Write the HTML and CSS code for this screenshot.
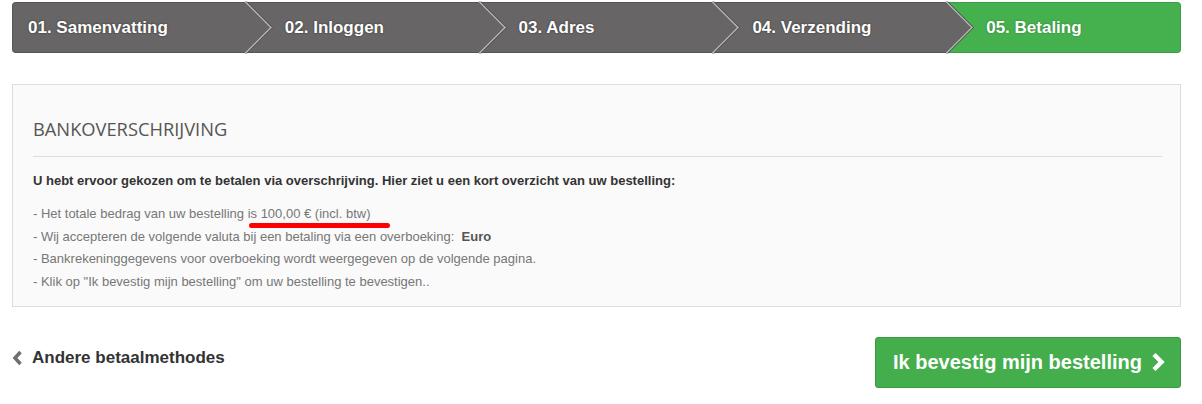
FILE: index.html
```html
<!DOCTYPE html>
<html lang="nl">
<head>
    <meta charset="UTF-8">
    <meta name="viewport" content="width=device-width, initial-scale=1.0">
    <title>Betaling</title>
    <link rel="stylesheet" href="styles.css">
</head>
<body>
    <div class="page">
        <ul class="steps">
            <li class="step first">01. Samenvatting</li>
            <li class="step">02. Inloggen</li>
            <li class="step">03. Adres</li>
            <li class="step">04. Verzending</li>
            <li class="step active last">05. Betaling</li>
        </ul>

        <div class="payment-box">
            <h3 class="box-title">BANKOVERSCHRIJVING</h3>
            <p class="intro">U hebt ervoor gekozen om te betalen via overschrijving. Hier ziet u een kort overzicht van uw bestelling:</p>
            <p class="info">
                - Het totale bedrag van uw bestelling i<span class="marked">s 100,00 € (incl. btw)</span><br>
                - Wij accepteren de volgende valuta bij een betaling via een overboeking:&nbsp; <b>Euro</b><br>
                - Bankrekeninggegevens voor overboeking wordt weergegeven op de volgende pagina.<br>
                - Klik op "Ik bevestig mijn bestelling" om uw bestelling te bevestigen..
            </p>
        </div>

        <div class="actions">
            <a class="back-link" href="#">
                <svg class="chev" width="11" height="16" viewBox="0 0 11 16"><path d="M8.5 2 L3 8 L8.5 14" fill="none" stroke="#6f6f6f" stroke-width="3.5"/></svg>
                Andere betaalmethodes
            </a>
            <button class="confirm">
                Ik bevestig mijn bestelling
                <svg class="chev" width="15" height="20" viewBox="0 0 15 20"><path d="M3 2.5 L10.5 10 L3 17.5" fill="none" stroke="#fff" stroke-width="4.5"/></svg>
            </button>
        </div>
    </div>
</body>
</html>
```

FILE: styles.css
```css
body{
    margin: 0;
    background-color: #fff;
    font-family: "Liberation Sans", Arial, sans-serif;
}
.page{
    padding: 2px 21px 0 12px;
}

/* steps bar */
.steps{
    display: flex;
    list-style: none;
    margin: 0;
    padding: 0;
    height: 51px;
}
.step{
    flex: none;
    width: 20%;
    position: relative;
    display: flex;
    align-items: center;
    padding-left: 39px;
    background-color: #676565;
    border-top: 1px solid #555;
    border-bottom: 1px solid #555;
    box-sizing: border-box;
    color: #fff;
    font-weight: bold;
    font-size: 17px;
    text-shadow: 0 0 2px rgba(0, 0, 0, 0.6);
}
.step.first{
    padding-left: 15px;
    border-left: 1px solid #555;
    border-radius: 4px 0 0 4px;
    z-index: 5;
}
.step:nth-child(2){ z-index: 4; }
.step:nth-child(3){ z-index: 3; }
.step:nth-child(4){ z-index: 2; }
.step:not(.last)::after{
    content: "";
    position: absolute;
    top: 6px;
    right: -18px;
    width: 36px;
    height: 36px;
    background-color: #676565;
    transform: rotate(45deg);
    border-top: 1px solid #c8c8c8;
    border-right: 1px solid #c8c8c8;
    box-shadow: 1px -1px 0 #555;
}
.step.active{
    background-color: #44b04e;
    border-color: #3c9c45;
    text-shadow: 0 0 2px rgba(0, 0, 0, 0.3);
}
.step.last{
    border-right: 1px solid #3c9c45;
    border-radius: 0 4px 4px 0;
}

/* panel */
.payment-box{
    margin-top: 31px;
    padding: 16px 18px 12px 20px;
    background-color: #fafafa;
    border: 1px solid #ddd;
}
.box-title{
    margin: 0;
    padding: 15px 0 15px 0;
    border-bottom: 1px solid #ddd;
    font-family: "Open Sans", sans-serif;
    font-weight: normal;
    font-size: 18.3px;
    color: #555;
}
.intro{
    margin: 16px 0 0 0;
    font-size: 13px;
    font-weight: bold;
    color: #333;
}
.info{
    margin: 15px 0 0 0;
    font-size: 13px;
    line-height: 22.7px;
    color: #777;
}
.info b{
    color: #555;
}
.marked{
    position: relative;
}
.marked::after{
    content: "";
    position: absolute;
    left: -2px;
    right: -20px;
    bottom: -7px;
    height: 5px;
    border-radius: 3px;
    background-color: #f00;
}

/* bottom actions */
.actions{
    display: flex;
    justify-content: space-between;
    align-items: flex-start;
    margin-top: 30px;
}
.back-link{
    display: flex;
    align-items: center;
    gap: 9px;
    margin-top: 11px;
    color: #333;
    font-weight: bold;
    font-size: 17px;
    text-decoration: none;
}
.confirm{
    display: flex;
    align-items: center;
    gap: 9px;
    height: 51px;
    width: 306px;
    padding: 0 0 0 17px;
    background-color: #44ae4c;
    border: 1px solid #3a9a42;
    border-radius: 3px;
    color: #fff;
    font-family: "Liberation Sans", Arial, sans-serif;
    font-weight: bold;
    font-size: 20px;
}
```
